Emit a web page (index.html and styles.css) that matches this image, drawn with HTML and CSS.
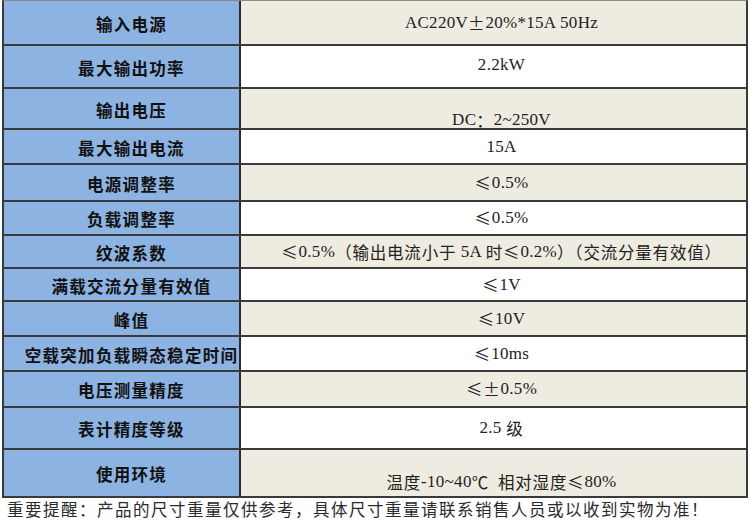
FILE: index.html
```html
<!DOCTYPE html>
<html lang="zh-CN">
<head>
<meta charset="utf-8">
<title>技术参数</title>
<link rel="stylesheet" href="styles.css">
</head>
<body>
<div class="sheet">
  <div class="spec">
    <div class="row h1 tan"><div class="label">输入电源</div><div class="value">AC220V<span class="cj">±</span>20%*15A 50Hz</div></div>
    <div class="row h2 white"><div class="label">最大输出功率</div><div class="value up">2.2kW</div></div>
    <div class="row h3 tan"><div class="label">输出电压</div><div class="value bottom">DC<span class="cj">：</span>2~250V</div></div>
    <div class="row h4 white"><div class="label">最大输出电流</div><div class="value">15A</div></div>
    <div class="row h5 tan"><div class="label">电源调整率</div><div class="value"><span class="cj">≤</span>0.5%</div></div>
    <div class="row h6 white"><div class="label">负载调整率</div><div class="value"><span class="cj">≤</span>0.5%</div></div>
    <div class="row h7 tan"><div class="label">纹波系数</div><div class="value"><span class="cj">≤</span>0.5%<span class="cj">（输出电流小于</span> 5A <span class="cj">时≤</span>0.2%<span class="cj">）（交流分量有效值）</span></div></div>
    <div class="row h8 white"><div class="label">满载交流分量有效值</div><div class="value"><span class="cj">≤</span>1V</div></div>
    <div class="row h9 tan"><div class="label">峰值</div><div class="value"><span class="cj">≤</span>10V</div></div>
    <div class="row h10 white"><div class="label">空载突加负载瞬态稳定时间</div><div class="value"><span class="cj">≤</span>10ms</div></div>
    <div class="row h11 tan"><div class="label">电压测量精度</div><div class="value"><span class="cj">≤±</span>0.5%</div></div>
    <div class="row h12 white"><div class="label">表计精度等级</div><div class="value">2.5 <span class="cj">级</span></div></div>
    <div class="row h13 tan"><div class="label">使用环境</div><div class="value bottom2"><span class="cj">温度</span>-10~40<span class="cj">℃  相对湿度≤</span>80%</div></div>
  </div>
  <p class="note">重要提醒：产品的尺寸重量仅供参考，具体尺寸重量请联系销售人员或以收到实物为准！</p>
</div>
</body>
</html>
```

FILE: styles.css
```css
html, body {
  margin: 0;
  padding: 0;
  background: #ffffff;
}

.sheet {
  width: 750px;
  height: 520px;
  padding-left: 2px;
  box-sizing: border-box;
  overflow: hidden;
}

.spec {
  width: 746px;
  border-top: 1px solid #8a8a8a;
  border-left: 2px solid #3a3a3a;
  border-right: 2px solid #3a3a3a;
  box-sizing: border-box;
}

.row {
  display: grid;
  grid-template-columns: 237px 1fr;
  border-bottom: 2px solid #3a3a3a;
  box-sizing: border-box;
}

.h1 { height: 45px; }
.h2 { height: 43px; }
.h3 { height: 41px; }
.h4 { height: 35px; }
.h5 { height: 37px; }
.h6 { height: 34px; }
.h7 { height: 33px; }
.h8 { height: 33px; }
.h9 { height: 35px; }
.h10 { height: 35px; }
.h11 { height: 36px; }
.h12 { height: 42px; }
.h13 { height: 48px; }

.label {
  background: #8db3e2;
  border-right: 2px solid #2a2a2a;
  display: flex;
  align-items: center;
  justify-content: center;
  font-family: "Noto Sans CJK SC", sans-serif;
  font-weight: 700;
  font-size: 16.5px;
  letter-spacing: 1.3px;
  color: #111;
  white-space: nowrap;
  padding-top: 2px;
  padding-left: 20px;
}

.value {
  display: flex;
  align-items: center;
  justify-content: center;
  font-family: "Liberation Serif", "Noto Sans CJK SC", serif;
  font-size: 17px;
  letter-spacing: 0.3px;
  color: #222;
  white-space: pre;
  padding-left: 16px;
}

.value.up { padding-bottom: 4px; }
.value.bottom { align-items: flex-end; padding-bottom: 0; line-height: 16px; }
.value.bottom2 { align-items: flex-end; padding-bottom: 6px; line-height: 16px; }

.tan .value { background: #eeece1; }
.white .value { background: #ffffff; }

.cj {
  font-family: "Noto Sans CJK SC", sans-serif;
  font-weight: 400;
  font-size: 16.5px;
  letter-spacing: 0.8px;
  color: #222;
}

.note {
  margin: 0;
  padding: 2px 0 0 5px;
  font-family: "Noto Sans CJK SC", serif;
  font-size: 16.5px;
  line-height: 18px;
  letter-spacing: 1.5px;
  color: #2a2a2a;
  white-space: nowrap;
}
```
